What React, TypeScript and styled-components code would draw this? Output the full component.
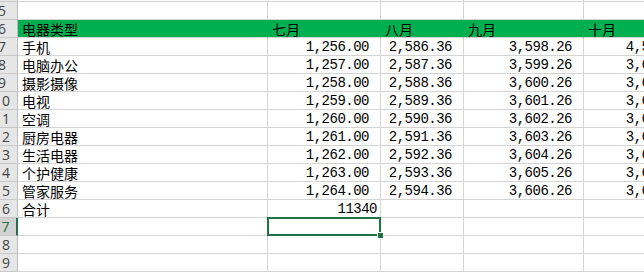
import React from 'react';
import styled, { createGlobalStyle } from 'styled-components';

interface SalesRow {
  type: string;
  jul: string;
  aug: string;
  sep: string;
  oct: string;
}

const GREEN = '#217346';
const GRID = '#d4d4d4';

const GlobalStyle = createGlobalStyle`
  html, body {
    margin: 0;
    padding: 0;
    background: #ffffff;
    overflow: hidden;
  }
  body {
    font-family: 'Noto Sans CJK SC', 'Liberation Sans', sans-serif;
  }
`;

const Sheet = styled.div`
  display: flex;
  flex-direction: column;
  margin-left: -13px;
  margin-top: -16px;
  width: 657px;
  overflow: hidden;
`;

const Row = styled.div<{ $band?: boolean }>`
  display: grid;
  grid-template-columns: 31px 250px 113px 83px 120px 117px;
  height: 18px;
  background: ${p => (p.$band ? '#00b050' : '#ffffff')};
`;

const RowHead = styled.div<{ $active?: boolean }>`
  box-sizing: border-box;
  height: 18px;
  background: ${p => (p.$active ? '#d2d2d2' : '#e6e6e6')};
  color: ${p => (p.$active ? GREEN : '#444444')};
  border-right: ${p => (p.$active ? `2px solid ${GREEN}` : '1px solid #bdbdbd')};
  border-bottom: 1px solid #c8c8c8;
  font-family: 'Open Sans', 'Liberation Sans', sans-serif;
  font-size: 14px;
  line-height: 18px;
  text-align: center;
  overflow: hidden;
`;

const Cell = styled.div<{ $num?: boolean; $band?: boolean; $tight?: boolean; $open?: boolean }>`
  position: relative;
  box-sizing: border-box;
  height: 18px;
  padding: 1px ${p => (p.$num ? (p.$tight ? '3px' : '11px') : '3px')} 0 4px;
  border-right: 1px solid ${p => (p.$band ? '#00b050' : p.$open ? 'transparent' : GRID)};
  border-bottom: 1px solid ${GRID};
  color: #000000;
  font-family: ${p =>
    p.$num
      ? "'Liberation Mono', 'Noto Sans CJK SC', monospace"
      : "'Noto Sans CJK SC', 'Liberation Sans', sans-serif"};
  font-size: 14px;
  letter-spacing: ${p => (p.$num ? '-0.5px' : '0')};
  line-height: 17px;
  text-align: ${p => (p.$num ? 'right' : 'left')};
  white-space: nowrap;
`;

const TitleText = styled.span`
  position: relative;
  top: -1px;
  font-size: 14px;
`;

const Selection = styled.div`
  position: absolute;
  z-index: 2;
  left: -1px;
  top: -1px;
  right: -1px;
  bottom: -1px;
  border: 2px solid ${GREEN};
  pointer-events: none;
`;

const FillHandle = styled.div`
  position: absolute;
  z-index: 3;
  right: -4px;
  bottom: -4px;
  width: 5px;
  height: 5px;
  background: ${GREEN};
  border: 1px solid #ffffff;
`;

const rows: SalesRow[] = [
  { type: '手机', jul: '1,256.00', aug: '2,586.36', sep: '3,598.26', oct: '4,586.26' },
  { type: '电脑办公', jul: '1,257.00', aug: '2,587.36', sep: '3,599.26', oct: '3,612.26' },
  { type: '摄影摄像', jul: '1,258.00', aug: '2,588.36', sep: '3,600.26', oct: '3,613.26' },
  { type: '电视', jul: '1,259.00', aug: '2,589.36', sep: '3,601.26', oct: '3,614.26' },
  { type: '空调', jul: '1,260.00', aug: '2,590.36', sep: '3,602.26', oct: '3,615.26' },
  { type: '厨房电器', jul: '1,261.00', aug: '2,591.36', sep: '3,603.26', oct: '3,616.26' },
  { type: '生活电器', jul: '1,262.00', aug: '2,592.36', sep: '3,604.26', oct: '3,617.26' },
  { type: '个护健康', jul: '1,263.00', aug: '2,593.36', sep: '3,605.26', oct: '3,618.26' },
  { type: '管家服务', jul: '1,264.00', aug: '2,594.36', sep: '3,606.26', oct: '3,619.26' },
];

const months = ['七月', '八月', '九月', '十月'];

const App: React.FC = () => {
  return (
    <>
      <GlobalStyle />
      <Sheet>
        <Row>
          <RowHead>4</RowHead>
          <Cell $open>
            <TitleText>2020年下半年电器销售额</TitleText>
          </Cell>
          <Cell />
          <Cell />
          <Cell />
          <Cell />
        </Row>
        <Row>
          <RowHead>5</RowHead>
          <Cell />
          <Cell />
          <Cell />
          <Cell />
          <Cell />
        </Row>
        <Row $band>
          <RowHead>6</RowHead>
          <Cell $band>电器类型</Cell>
          {months.map(m => (
            <Cell key={m} $band>
              {m}
            </Cell>
          ))}
        </Row>
        {rows.map((r, i) => (
          <Row key={r.type}>
            <RowHead>{i + 7}</RowHead>
            <Cell>{r.type}</Cell>
            <Cell $num>{r.jul}</Cell>
            <Cell $num>{r.aug}</Cell>
            <Cell $num>{r.sep}</Cell>
            <Cell $num>{r.oct}</Cell>
          </Row>
        ))}
        <Row>
          <RowHead>16</RowHead>
          <Cell>合计</Cell>
          <Cell $num $tight>
            11340
          </Cell>
          <Cell />
          <Cell />
          <Cell />
        </Row>
        <Row>
          <RowHead $active>17</RowHead>
          <Cell />
          <Cell>
            <Selection />
            <FillHandle />
          </Cell>
          <Cell />
          <Cell />
          <Cell />
        </Row>
        {[18, 19].map(n => (
          <Row key={n}>
            <RowHead>{n}</RowHead>
            <Cell />
            <Cell />
            <Cell />
            <Cell />
            <Cell />
          </Row>
        ))}
      </Sheet>
    </>
  );
};

export default App;
